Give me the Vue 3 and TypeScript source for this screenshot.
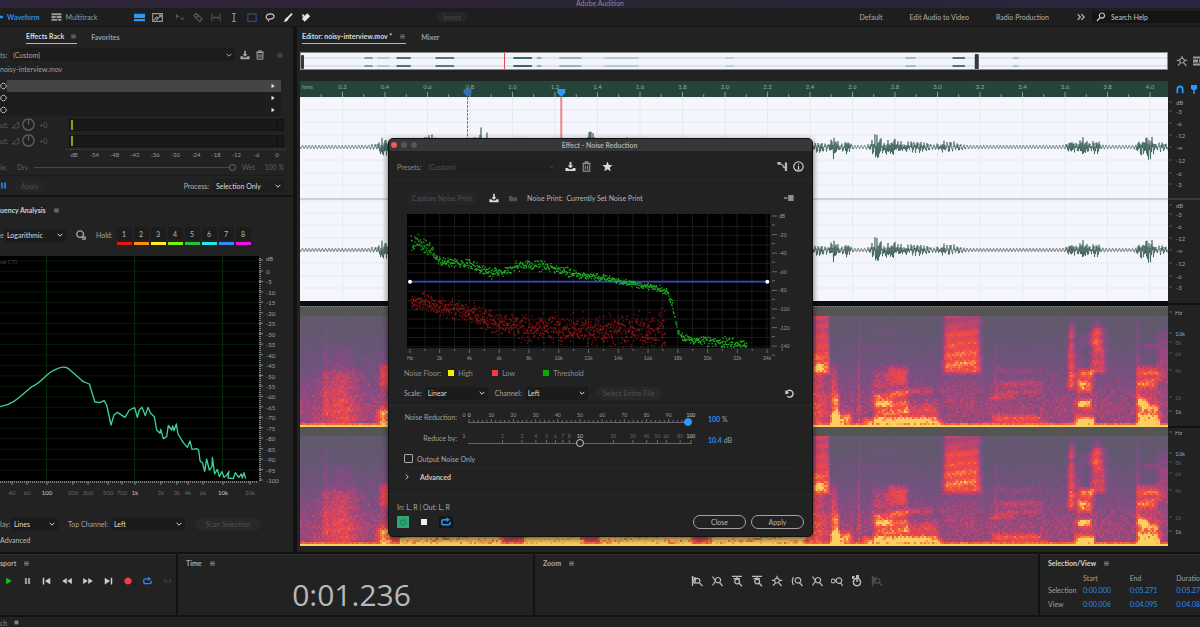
<script setup lang="ts">
import { h, ref } from 'vue'

interface Glyph { s?: string; f?: string; w?: number }

const glyphs: Record<string, Glyph> = {
  menu: { s: 'M2 3.5H10M2 6H10M2 8.5H10', w: 1.3 },
  save: { f: 'M5 1H7V5H9L6 8L3 5H5ZM0.5 7.5H3L4.5 9H7.5L9 7.5H11.5V11H0.5Z' },
  trash: { s: 'M2.5 3H9.5V11H2.5ZM1.5 2.6H10.5M4.5 2.4V1H7.5V2.4M4.8 5V9.2M7.2 5V9.2', w: 1.2 },
  star: { f: 'M6 .6L7.6 4.3L11.6 4.6L8.5 7.2L9.5 11.2L6 9L2.5 11.2L3.5 7.2L.4 4.6L4.4 4.3Z' },
  chevron: { s: 'M2.5 4.3L6 7.8L9.5 4.3', w: 1.5 },
  right: { s: 'M4.3 2.5L7.8 6L4.3 9.5', w: 1.5 },
  info: { s: 'M6 .9A5.1 5.1 0 1 1 5.9 .9ZM6 5.2V9M6 3V4.1M5 9H7', w: 1.2 },
  route: { s: 'M3.5 2.5L8 6', w: 1.1, f: 'M.5 1H4V4H.5ZM8.6 1.5H11V11H8.6ZM5 6.2H9V8.4Z' },
  stack: { f: 'M0 5H4.2V6.8H0ZM5 2.5H11.5V9.5H5Z' },
  open: { f: 'M1 3.5H4.5L5.5 5H11V10H1Z' },
  wave: { f: 'M0 1H12V11H0Z' },
  tracks: { f: 'M0 1.5H12V3.6H0ZM0 4.6H5V7.4H0ZM6 4.6H12V7.4H6ZM0 8.4H7V10.5H0ZM8 8.4H12V10.5H8Z' },
  view1: { f: 'M0 2H12V6.6H0ZM0 7.6H12V10.2H0Z' },
  view2: { s: 'M.7 1.8H11.3V10.2H.7ZM2 8.8L5 5.5L7 7.5M7.5 3.5H10V6M10 3.5L4.5 8.8', w: 1.2 },
  move: { s: 'M6.2 7.5H11.5M9 5.8V9.2', f: 'M1 1.5L6 5L3.4 5.5L1.5 8Z', w: 1.1 },
  razor: { s: 'M1 3.5L4 1L11 8L8 11ZM4 6L6.5 3.6', w: 1.5 },
  slip: { s: 'M1 1.5V10.5M11 1.5V10.5M2.5 6H9.5M4.5 4L2.5 6L4.5 8M7.5 4L9.5 6L7.5 8', w: 1.2 },
  ibeam: { s: 'M6 1.5V10.5M3.8 1.2H8.2M3.8 10.8H8.2', w: 1.4 },
  marquee: { s: 'M1 1.5H11V10.5H1Z', w: 1.5 },
  lasso: { s: 'M4 8.2C0 7.5 .5 1.6 6.5 1.6C12 1.6 12.5 7.4 7 7.6C4 7.8 3.4 10 4.8 10.6', w: 1.4 },
  brush: { s: 'M10.8 1.4L6 6.5', f: 'M5.6 5.5L7 7C5.8 10.5 3.6 11.4 .8 11C2.6 9.5 2.4 6.5 5.6 5.5Z', w: 2.2 },
  heal: { f: 'M7.6 1L11 4.4L4.4 11L1 7.6ZM1.5 2.5H4V5H1.5Z' },
  search: { s: 'M7.2 1.2A3.1 3.1 0 1 1 7.1 1.2ZM5 6.6L1.2 10.8', w: 1.4 },
  more: { s: 'M2 2.6L5.2 6L2 9.4M6.5 2.6L9.7 6L6.5 9.4', w: 1.6 },
  play: { f: 'M2.5 1L11 6L2.5 11Z' },
  pause: { f: 'M1.5 1H5.2V11H1.5ZM6.8 1H10.5V11H6.8Z' },
  first: { f: 'M1 1.5H3V10.5H1ZM11 1.5V10.5L4 6Z' },
  rewind: { f: 'M5.7 2.5V9.5L.2 6ZM11.8 2.5V9.5L6.3 6Z' },
  forward: { f: 'M.2 2.5V9.5L5.7 6ZM6.3 2.5V9.5L11.8 6Z' },
  last: { f: 'M9 1.5H11V10.5H9ZM1 1.5V10.5L8 6Z' },
  record: { f: 'M6 .6A5.4 5.4 0 1 1 5.9 .6Z' },
  loop: { s: 'M7.5 9.4H3Q1 9.4 1 7.4V5.2Q1 3.2 3 3.2H7M11 5.6V7.4Q11 9.4 9 9.4H5', f: 'M6.5 .4L10.8 3.2L6.5 6Z', w: 1.8 },
  skip: { s: 'M3.5 3.5L1 6L3.5 8.5M8.5 3.5L11 6L8.5 8.5M5 6H7', w: 1.2 },
  stop: { f: 'M1.5 1.5H10.5V10.5H1.5Z' },
  power: { s: 'M3.6 3.2A4 4 0 1 0 8.4 3.2M6 1.2V5.5', w: 1.2 },
  ring: { s: 'M6 1.3A4.7 4.7 0 1 1 5.9 1.3Z', w: 1.4 },
  knob: { s: 'M6 .8A5.2 5.2 0 1 1 5.9 .8ZM6 2V6', w: 1.2 },
  ramp: { s: 'M1 10.5H10.5V2.5Z', w: 1 },
  arrow: { f: 'M3 1.5L9.5 6L3 10.5Z' },
  undo: { s: 'M2 4.2A4.6 4.6 0 1 1 3 9.6', f: 'M.2 1.6L5.8 5.2L.6 7.4Z', w: 1.9 },
  lens: { s: 'M5 1A4 4 0 1 1 4.9 1ZM7 8.5H11V11H7', w: 1.5 },
  magnet: { s: 'M2.5 11V5.5A3.5 3.5 0 0 1 9.5 5.5V11', w: 2.4 },
  pin: { f: 'M2 0H10V5L7 7V12H5V7L2 5Z' },
  zoomIn: { s: 'M1.5 1V11M1.5 1.5L5 5M5 2.5L2 6L4 9M6.5 3.4A2.4 2.4 0 1 1 6.4 3.4ZM8.2 7.6L11.5 11', w: 1.3 },
  zoomOut: { s: 'M1.5 1.5L4.5 6L1.5 10.5M7 2.5A2.7 2.7 0 1 1 6.9 2.5ZM8.6 7.5L11.5 11', w: 1.2 },
  zoomTop: { s: 'M1 1.4H11M2.5 3.6H9M6 1.5V5M6.2 4A2.4 2.4 0 1 1 6.1 4ZM8 8L11 11.3', w: 1.3 },
  zoomAll: { s: 'M6 .8V4M.8 5.4H4M8 5.4H11.2M2 10.5L4.5 7.8M7.4 7.4L10.5 11M6 3.2A2.4 2.4 0 1 1 5.9 3.2Z', w: 1.2 },
  zoomSel: { s: 'M2.5 2Q.2 6 2.5 10M7 2.6A2.8 2.8 0 1 1 6.9 2.6ZM8.8 8L11.5 11', w: 1.2 },
  zoomBoth: { s: 'M2.2 4A2 2 0 1 1 2.1 4ZM8 2.8A2.8 2.8 0 1 1 7.9 2.8ZM9.6 8L11.8 11', w: 1.2 },
  clock: { s: 'M6 3.6A3.6 3.6 0 1 1 5.9 3.6ZM6 4.5V7', f: 'M5 0H8V3.5H5ZM1 1H3.5V4H1Z', w: 1.5 },
}

const Icon = (p: { name: string }) => {
  const g = glyphs[p.name]
  return h('svg', { class: 'icon', viewBox: '0 0 12 12', 'aria-hidden': 'true' }, [
    g.s ? h('path', { d: g.s, fill: 'none', stroke: 'currentColor', 'stroke-width': g.w ?? 1.2 }) : null,
    g.f ? h('path', { d: g.f, fill: 'currentColor' }) : null,
  ])
}
Icon.props = ['name']

const wet = ref(100)
const reduction = ref(100)
const reduceBy = ref(50)
const noiseOnly = ref(false)

let seed = 20417
const rnd = () => {
  seed = (seed * 1103515245 + 12345) % 2147483648
  return seed / 2147483648
}
const pct = (v: number) => `${v}%`
const clamp = (v: number, a: number, b: number) => Math.min(b, Math.max(a, v))

/* Waveform: [centre, half width, amplitude] of each burst */
const bursts = [
  [84, 7, 9], [90, 20, 5], [130, 9, 14], [150, 8, 7], [182, 13, 19], [230, 14, 9], [290, 8, 19], [330, 16, 9],
  [420, 22, 8], [470, 16, 8], [520, 12, 5], [534, 6, 11], [546, 7, 6], [577, 8, 13], [592, 14, 8], [615, 20, 6],
  [648, 18, 5], [773, 8, 6], [784, 7, 9], [796, 7, 6], [841, 6, 10], [848, 8, 14], [862, 8, 4],
]
function wavePath(): string {
  let d = 'M0 0'
  for (let i = 0; i < 1736; i++) {
    const x = i / 2
    let env = 0
    for (const [c, w, a] of bursts) {
      const t = Math.abs(x - c) / w
      if (t < 1.5) env = Math.max(env, a * Math.exp(-t * t * 1.6))
    }
    const calm = Math.sin(x * 1.9) * 1.8
    const y = calm + (i % 2 ? 1 : -1) * env * (0.15 + rnd() * 0.85)
    d += `L${x} ${y.toFixed(1)}`
  }
  return d
}
const wave = wavePath()
const waveRows = [0, 12, 24, 37, 62, 75, 87].map(v => v + 1)
const seconds = Array.from({ length: 20 }, (_, i) => ({ at: (42.5 * (i + 1)) / 8.68, text: ((i + 1) / 5).toFixed(1) }))

/* Spectrogram: [x0, x1, y0, y1, level, softness], x in pixels, y as a share of the height */
const zones = [
  [22, 58, 0.5, 1, 0.12, 12], [23, 26, 0.12, 0.9, 0.12, 2], [32, 48, 0.28, 0.95, 0.12, 8], [78, 90, 0.85, 1, 0.36, 5],
  [80, 100, 0.45, 0.62, 0.3, 3], [82, 100, 0.1, 1, 0.1, 4], [100, 516, 0.35, 1, 0.2, 8], [100, 200, 0.85, 1, 0.35, 6],
  [225, 280, 0.88, 1, 0.4, 6], [300, 390, 0.9, 1, 0.35, 6], [410, 505, 0.88, 1, 0.36, 8],
  [514, 528, -0.1, 0.5, 0.5, 2], [514, 528, 0.45, 1, 0.16, 6], [531, 536, 0.45, 1, 0.24, 3], [531, 550, 0.9, 1, 0.46, 3],
  [533, 538, 0.72, 0.95, 0.28, 2], [557, 558, 0.05, 1, 0.24, 1], [573, 605, 0.48, 0.74, 0.17, 5], [588, 606, 0.46, 0.6, 0.2, 5],
  [563, 640, 0.95, 1, 0.5, 3], [574, 606, 0.78, 0.94, 0.34, 3], [574, 590, 0.73, 0.8, 0.26, 3], [590, 606, 0.7, 0.72, 0.28, 3],
  [606, 632, 0.68, 0.69, 0.26, 2], [606, 636, 0.86, 0.95, 0.24, 3], [606, 636, 0.8, 0.83, 0.14, 3],
  [644, 679, -0.05, 0.5, 0.43, 5], [645, 676, 0.12, 0.46, 0.14, 4], [645, 676, 0.5, 0.8, 0.06, 6],
  [694, 696, 0.2, 0.8, 0.12, 1], [696, 740, 0.48, 0.5, 0.14, 5], [696, 740, 0.6, 0.63, 0.2, 5], [700, 740, 0.68, 0.7, 0.16, 5],
  [690, 712, 0.72, 0.75, 0.16, 5], [694, 738, 0.92, 0.94, 0.34, 4], [685, 745, 0.96, 1, 0.14, 5],
  [768, 772, 0.1, 0.66, 0.34, 3], [770, 775, 0.02, 0.2, 0.2, 3], [770, 780, 0.25, 0.6, 0.16, 5],
  [791, 804, 0.1, 0.5, 0.36, 5], [794, 799, 0, 0.3, 0.2, 3], [780, 794, 0.16, 0.24, 0.18, 4], [780, 792, 0.49, 0.56, 0.34, 3],
  [777, 790, 0.6, 0.67, 0.4, 3], [777, 790, 0.78, 0.82, 0.42, 2], [775, 793, 0.93, 1, 0.46, 3], [776, 792, 0.5, 1, 0.12, 6],
  [836, 838, 0.06, 1, 0.24, 1], [838, 856, 0.46, 0.53, 0.32, 4], [838, 854, 0.58, 0.64, 0.3, 4], [838, 846, 0.76, 0.8, 0.42, 3],
  [840, 856, 0.82, 0.85, 0.4, 3], [838, 858, 0.9, 1, 0.42, 3], [838, 858, 0.5, 1, 0.16, 5], [858, 868, 0.14, 0.58, 0.22, 5],
  [843, 856, 0.26, 0.28, 0.24, 3], [572, 600, 0.12, 0.15, 0.12, 6], [562, 586, 0.28, 0.3, 0.14, 5], [695, 740, 0.1, 0.12, 0.1, 6],
]
const ramp: [number, number[]][] = [
  [0, [92, 90, 98]], [0.14, [101, 88, 114]], [0.28, [114, 82, 126]], [0.4, [138, 74, 130]], [0.52, [176, 70, 115]],
  [0.64, [218, 68, 92]], [0.78, [244, 76, 66]], [0.9, [248, 132, 68]], [1, [252, 208, 96]],
]
function tone(v: number): string {
  for (let i = 1; i < ramp.length; i++) {
    const [b, cb] = ramp[i]
    if (v <= b) {
      const [a, ca] = ramp[i - 1]
      const t = (v - a) / (b - a)
      return `rgb(${ca.map((c, k) => Math.round(c + (cb[k] - c) * t)).join(',')})`
    }
  }
  return 'rgb(252,208,96)'
}
const COLS = 434
const ROWS = 56
const LEVELS = 26
function spectrum() {
  const out: string[] = Array(LEVELS).fill('')
  for (let r = 0; r < ROWS; r++) {
    const y = r / (ROWS - 1)
    let run = -1
    let from = 0
    for (let c = 0; c <= COLS; c++) {
      let level = -1
      if (c < COLS) {
        const x = c * 2
        let v = 0.1 + 0.36 * clamp((y - 0.12) / 0.7, 0, 1)
        for (const [x0, x1, y0, y1, a, s] of zones) {
          const fx = clamp((x - x0 + s) / (s * 1.4), 0, 1) * clamp((x1 - x + s) / (s * 1.4), 0, 1)
          if (fx === 0) continue
          const fy = clamp((y - y0) / 0.05 + 0.8, 0, 1) * clamp((y1 - y) / 0.05 + 0.8, 0, 1)
          v += a * fx * fy * (1 + 0.1 * Math.sin(y * 70 + x * 0.1))
        }
        v += (rnd() + rnd() - 1) * (0.04 + 0.12 * clamp(y * 1.6, 0, 1))
        if (r === ROWS - 2) v = Math.max(v, 0.76 + rnd() * 0.12)
        if (r === ROWS - 1) v = 0.98
        level = Math.round(clamp(v, 0, 1) * (LEVELS - 1))
      }
      if (level !== run) {
        if (run >= 0) out[run] += `M${from} ${r}h${c - from}v1h${from - c}z`
        run = level
        from = c
      }
    }
  }
  return out.map((d, i) => ({ d, fill: tone(i / (LEVELS - 1)) }))
}
const bands = spectrum()

/* Overview bursts: [x share, width share, opacity] */
const overview = [
  [7.3, 1, 0.5], [8.8, 1.4, 0.2], [11, 1.7, 0.8], [15.5, 2.2, 0.75], [24.5, 2.2, 0.9], [27.2, 0.6, 0.4], [29.8, 2.6, 0.35],
  [35, 4, 0.2], [49, 1, 0.15], [69.8, 1.2, 0.3], [75.2, 1.5, 0.8], [82.2, 0.7, 0.25],
]

/* Frequency analysis */
const spectrumLine = 'M0 470C40 464 60 440 95 410C120 402 140 370 160 362Q195 342 210 360L250 395L268 402L275 425L285 456L300 458L312 452L320 465L333 525L342 495L352 487L375 502L388 480L404 473L412 502L418 480L426 472L436 497L444 472L452 490L463 500L470 540L480 550L482 538L490 566L500 560L505 526L515 540L518 528L522 542L529 522L534 552L550 578L562 592L570 573L576 598L590 596L596 600L600 632L608 640L614 664L620 627L628 660L636 650L637 622L644 672L652 658L658 680L666 665L672 682L680 676L687 664L684 684L700 686L706 668L716 682L724 672L727 684L732 668L737 686'
const levelMarks = ['dB', '0', '-5', '-10', '-15', '-20', '-25', '-30', '-35', '-40', '-45', '-50', '-55', '-60', '-65', '-70', '-75', '-80', '-85', '-90', '-95', '-100']
const freqMarks = [
  { x: 12, t: '40' }, { x: 27, t: '60' }, { x: 47, t: '100', on: true }, { x: 73, t: '200' }, { x: 88, t: '300' },
  { x: 108, t: '500' }, { x: 122, t: '700' }, { x: 135, t: '1k', on: true }, { x: 161, t: '2k' }, { x: 177, t: '3k' },
  { x: 188, t: '4k' }, { x: 203, t: '6k' }, { x: 223, t: '10k', on: true }, { x: 250, t: '20k' },
]
const holds = ['#f01010', '#ff8c10', '#fff020', '#78f010', '#28c040', '#20e8f0', '#3090f8', '#f010e8']
const meterMarks = ['dB', '-54', '-48', '-42', '-36', '-30', '-24', '-18', '-12', '-6', '0']

/* Noise print scatter, in chart units */
function at(line: number[][], x: number): number {
  for (let i = 1; i < line.length; i++) {
    if (x <= line[i][0]) {
      const [x0, y0] = line[i - 1]
      const [x1, y1] = line[i]
      return y0 + ((y1 - y0) * (x - x0)) / (x1 - x0)
    }
  }
  return line[line.length - 1][1]
}
const high = [[62, 340], [80, 330], [110, 350], [150, 395], [200, 397], [240, 402], [300, 425], [330, 425], [370, 408], [450, 402], [520, 420], [570, 434], [640, 441], [700, 455], [780, 467], [830, 482], [845, 520], [862, 605], [880, 622], [960, 631], [1070, 640]]
const low = [[62, 520], [100, 506], [150, 530], [210, 535], [270, 560], [330, 580], [420, 590], [550, 597], [825, 600]]
function dots(line: number[][], n: number, spread: (x: number) => number): string {
  const x0 = line[0][0]
  const x1 = line[line.length - 1][0]
  let d = ''
  for (let i = 0; i < n; i++) {
    const x = x0 + ((x1 - x0) * i) / n
    const y = at(line, x) + (rnd() + rnd() + rnd() - 1.5) * spread(x)
    d += `M${x.toFixed(0)} ${clamp(y, 254, 647).toFixed(0)}h4v4h-4z`
  }
  return d
}
const highDots = dots(high, 900, x => (x < 130 ? 26 : x < 560 ? 15 : x < 860 ? 10 : 14))
const lowDots = dots(low, 1100, x => 20 + x * 0.04)
const noiseDb = ['dB', '-20', '-40', '-60', '-80', '-100', '-120', '-140']
const noiseHz = ['Hz', '2k', '4k', '6k', '8k', '10k', '12k', '14k', '16k', '18k', '20k', '22k', '24k']
const logMarks = [2, 3, 4, 5, 6, 7, 8, 10, 20, 30, 40, 50, 60, 80, 100]
const logAt = (v: number) => 2.2 + Math.log10(v) * 47.8

const scaleTop = [[5, 'dB'], [14, '-3'], [26, '-6'], [38, '-12'], [50, '-∞'], [63, '-12'], [76, '-6'], [87, '-3']] as const
const scaleHz = [[215, 'Hz', 1], [236, '10k', 1], [245, '8k', 0], [256, '6k', 0], [273, '4k', 0], [300, '2k', 0], [314, '1k', 1]] as const
const zoomIcons = ['zoomIn', 'zoomOut', 'zoomTop', 'zoomTop', 'zoomAll', 'zoomSel', 'zoomOut', 'zoomBoth', 'clock', 'zoomIn']
const transport = ['play', 'pause', 'first', 'rewind', 'forward', 'last', 'record', 'loop', 'skip']
const tools = ['move', 'razor', 'slip', 'ibeam', 'marquee', 'lasso', 'brush', 'heal']
</script>

<template>
  <div class="shell">
    <header class="title">Adobe Audition</header>

    <nav class="toolbar">
      <button class="mode on"><Icon name="wave" />Waveform</button>
      <button class="mode"><Icon name="tracks" />Multitrack</button>
      <div class="views">
        <button class="on" aria-label="Waveform view"><Icon name="view1" /></button>
        <button aria-label="Spectral view"><Icon name="view2" /></button>
      </div>
      <div class="tools">
        <button v-for="t in tools" :key="t" :class="t" :aria-label="t"><Icon :name="t" /></button>
      </div>
      <button class="insert" disabled>Insert</button>
      <div class="spaces">
        <a href="#">Default</a><a href="#">Edit Audio to Video</a><a href="#">Radio Production</a>
        <button aria-label="More workspaces"><Icon name="more" /></button>
      </div>
      <label class="search"><Icon name="search" /><input type="text" aria-label="Search Help" placeholder="Search Help" /></label>
    </nav>

    <main>
      <aside>
        <section class="rack">
          <div class="tabs">
            <button class="tab on">Effects Rack <Icon name="menu" /></button>
            <button class="tab">Favorites</button>
          </div>
          <div class="preset">
            <label for="rack-preset">ts:</label>
            <span class="sel grow"><select id="rack-preset"><option>(Custom)</option></select><Icon name="chevron" /></span>
            <button aria-label="Save preset"><Icon name="save" /></button>
            <button aria-label="Delete preset"><Icon name="trash" /></button>
            <button class="dim fav" aria-label="Favorite"><Icon name="star" /></button>
          </div>
          <p class="file">noisy-interview.mov</p>
          <ul class="slots">
            <li v-for="n in 3" :key="n" :class="{ on: n === 1 }"><Icon name="ring" /><span></span><Icon name="arrow" /></li>
          </ul>
          <div v-for="n in 2" :key="n" class="meter">
            <span>ut:</span><Icon name="ramp" /><Icon class="knob" name="knob" /><span class="gain">+0</span>
            <div class="bar"><i></i></div><div class="clip"></div>
          </div>
          <div class="marks"><span v-for="m in meterMarks" :key="m">{{ m }}</span></div>
          <div class="mix">
            <span>ix:</span><label for="wet">Dry</label><input id="wet" v-model="wet" type="range" disabled />
            <span>Wet</span><span class="right">100 %</span>
          </div>
          <div class="process">
            <button class="blue" aria-label="Rack power"><Icon name="pause" /></button>
            <button class="pill" disabled>Apply</button>
            <label for="process">Process:</label>
            <span class="sel"><select id="process"><option>Selection Only</option></select><Icon name="chevron" /></span>
          </div>
        </section>

        <section class="freq">
          <h2>uency Analysis <Icon name="menu" /></h2>
          <div class="hold">
            <label for="fscale">e:</label>
            <span class="sel"><select id="fscale"><option>Logarithmic</option></select><Icon name="chevron" /></span>
            <Icon class="lens" name="lens" />
            <span>Hold:</span>
            <div class="slotset"><button v-for="(c, i) in holds" :key="c" :style="{ borderColor: c }">{{ i + 1 }}</button></div>
          </div>
          <div class="plot">
            <svg class="curve" viewBox="0 18 777 675" preserveAspectRatio="none" aria-label="Frequency curve">
              <path v-for="n in 21" :key="n" :d="`M0 ${n * 31.4 + 1}H777`" class="gridline" />
              <path d="M140 18V693M404 18V693M668 18V693" class="gridline strong" />
              <path :d="spectrumLine" class="trace" />
            </svg>
            <span class="live">ve CTI</span>
            <svg class="levels" aria-hidden="true">
              <g v-for="(m, i) in levelMarks" :key="m"><path :d="`M0 ${i ? 15 + (i - 1) * 10.45 : 4}h4`" /><text x="7" :y="i ? 18 + (i - 1) * 10.45 : 5">{{ m }}</text></g>
              <path d="M1 2V225" class="comb" />
            </svg>
          </div>
          <svg class="hz" aria-hidden="true">
            <path d="M0 1H258" class="comb" />
            <g v-for="m in freqMarks" :key="m.t"><path :d="`M${m.x} 0v4`" /><text :x="m.x" y="14" :class="{ lit: m.on }">{{ m.t }}</text></g>
          </svg>
          <div class="display">
            <label for="lines">lay:</label>
            <span class="sel lines"><select id="lines"><option>Lines</option></select><Icon name="chevron" /></span>
            <label for="top">Top Channel:</label>
            <span class="sel top"><select id="top"><option>Left</option></select><Icon name="chevron" /></span>
            <button class="pill" disabled>Scan Selection</button>
          </div>
          <p class="adv">Advanced</p>
        </section>
      </aside>

      <section class="editor">
        <div class="tabs">
          <button class="tab on">Editor: noisy-interview.mov * <Icon name="menu" /></button>
          <button class="tab">Mixer</button>
        </div>
        <div class="lane">
          <svg class="overview" aria-label="Overview">
            <path v-for="y in [5, 13]" :key="y" :d="`M0 ${y}h2000`" class="rule" />
            <template v-for="([x, w, o], i) in overview" :key="i">
              <rect v-for="y in [4, 12]" :key="y" :x="pct(x)" :y="y" :width="pct(w)" height="2" rx="1" :opacity="o" />
            </template>
            <line x1="23.5%" x2="23.5%" y1="0" y2="18" class="head" />
            <rect x="0" y="2" width="3" height="14" rx="1" class="grip" />
            <rect x="77.8%" y="1" width="4" height="16" rx="1" class="grip" />
          </svg>
          <div class="side"><Icon name="zoomAll" /><Icon name="tracks" /></div>
        </div>
        <div class="lane timeline">
          <svg class="ruler" aria-hidden="true">
            <text x="2" y="8">hms</text>
            <g v-for="s in seconds" :key="s.text">
              <text :x="pct(s.at)" y="8" class="mid">{{ s.text }}</text>
              <line :x1="pct(s.at)" :x2="pct(s.at)" y1="11" y2="16" />
              <line :x1="pct(s.at - 2.45)" :x2="pct(s.at - 2.45)" y1="13" y2="16" />
            </g>
            <svg x="19.3%" y="0" width="10" height="16" overflow="visible"><path d="M-4 8H4V12L0 16L-4 12Z" fill="#2e6fc0" /></svg>
            <svg x="30.1%" y="0" width="10" height="16" overflow="visible"><path d="M-4 8H4V12L0 16L-4 12Z" fill="#2a98ff" /></svg>
          </svg>
          <div class="side snap"><Icon name="magnet" /><Icon name="pin" /></div>
        </div>
        <div class="lane">
          <div class="stack">
            <svg class="waves" aria-label="Waveform">
              <g class="guides">
                <line v-for="s in seconds" :key="s.text" :x1="pct(s.at)" :x2="pct(s.at)" y1="0" y2="204" />
                <line v-for="y in waveRows" :key="y" x1="0" x2="100%" :y1="y" :y2="y" />
                <line v-for="y in waveRows" :key="-y" x1="0" x2="100%" :y1="y + 103" :y2="y + 103" />
              </g>
              <rect x="0" y="101" width="100%" height="2" fill="#cfd0d2" />
              <svg viewBox="0 0 868 204" preserveAspectRatio="none" width="100%" height="204">
                <path :d="wave" class="wave" transform="translate(0 50)" />
                <path :d="wave" class="wave" transform="translate(0 153)" />
                <path d="M0 153H868" class="zero" />
              </svg>
              <line x1="19.3%" x2="19.3%" y1="0" y2="204" class="cue" />
              <line x1="30.1%" x2="30.1%" y1="0" y2="204" class="cursor" />
            </svg>
            <div v-for="n in 2" :key="n" class="spectral">
              <svg :viewBox="`0 0 ${COLS} ${ROWS}`" preserveAspectRatio="none" aria-label="Spectral display">
                <path v-for="(b, i) in bands" :key="i" :d="b.d" :fill="b.fill" />
              </svg>
            </div>
          </div>
          <svg class="scale" aria-hidden="true">
            <g v-for="k in 2" :key="k">
              <g v-for="([y, t], i) in scaleTop" :key="i"><path :d="`M1 ${y + (k - 1) * 103}h3`" /><text x="8" :y="y + 3 + (k - 1) * 103">{{ t }}</text></g>
              <g v-for="([y, t, b], i) in scaleHz" :key="i" :class="{ faint: !b }"><path :d="`M1 ${y + (k - 1) * 120}h3`" /><text x="7" :y="y + 3 + (k - 1) * 120">{{ t }}</text></g>
            </g>
            <path d="M0 102H32" /><path d="M0 207H32M0 330H32" class="split" />
          </svg>
        </div>
      </section>
    </main>

    <footer>
      <section>
        <h2>sport <Icon name="menu" /></h2>
        <div class="transport"><button v-for="t in transport" :key="t" :class="t" :aria-label="t"><Icon :name="t" /></button></div>
      </section>
      <section class="padded"><h2>Time <Icon name="menu" /></h2><output>0:01.236</output></section>
      <section class="padded">
        <h2>Zoom <Icon name="menu" /></h2>
        <div class="zooms"><button v-for="(z, i) in zoomIcons" :key="i" :aria-label="`Zoom tool ${i + 1}`"><Icon :name="z" /></button></div>
      </section>
      <section class="padded">
        <h2 class="lit">Selection/View <Icon name="menu" /></h2>
        <table>
          <thead><tr><th></th><th>Start</th><th>End</th><th>Duration</th></tr></thead>
          <tbody>
            <tr><th>Selection</th><td>0:00.000</td><td>0:05.271</td><td>0:05.271</td></tr>
            <tr><th>View</th><td>0:00.006</td><td>0:04.095</td><td>0:04.089</td></tr>
          </tbody>
        </table>
      </section>
    </footer>
    <div class="status"><span>ch</span><Icon name="stop" /></div>

    <div class="dialog" role="dialog" aria-label="Effect - Noise Reduction">
      <div class="bar-top"><i class="close"></i><i></i><i></i><span>Effect - Noise Reduction</span></div>
      <div class="drow presets">
        <label for="preset">Presets:</label>
        <span class="sel wide dim"><select id="preset" disabled><option>(Custom)</option></select><Icon name="chevron" /></span>
        <button aria-label="Save preset"><Icon name="save" /></button>
        <button class="muted" aria-label="Delete preset"><Icon name="trash" /></button>
        <button class="fav" aria-label="Favorite"><Icon name="star" /></button>
        <button class="end" aria-label="Routing"><Icon name="route" /></button>
        <button aria-label="Information"><Icon name="info" /></button>
      </div>
      <div class="box">
        <div class="drow capture">
          <button class="pill" disabled>Capture Noise Print</button>
          <button aria-label="Save noise print"><Icon name="save" /></button>
          <button class="dim" aria-label="Load noise print"><Icon name="open" /></button>
          <span>Noise Print:&nbsp; Currently Set Noise Print</span>
          <button class="end muted" aria-label="Chart options"><Icon name="stack" /></button>
        </div>
        <div class="print">
          <svg class="scatter" viewBox="51 252 1089 400" preserveAspectRatio="none" aria-label="Noise print chart">
            <path v-for="n in 24" :key="n" :d="`M${60 + n * 44.6} 252V652`" class="g" />
            <path v-for="n in 14" :key="n" :d="`M51 ${262 + n * 27.6}H1140`" class="g" />
            <path :d="lowDots" fill="#b81818" opacity=".72" />
            <path d="M60 454H1132" class="curve-line" />
            <path :d="highDots" fill="#25d325" opacity=".78" />
            <circle cx="60" cy="454" r="6" /><circle cx="1132" cy="454" r="6" />
          </svg>
          <svg class="db" aria-hidden="true">
            <g v-for="(t, i) in noiseDb" :key="t"><path :d="`M2 ${2 + i * 18.6}h5M2 ${11 + i * 18.6}h3`" /><text x="9" :y="4 + i * 18.6">{{ t }}</text></g>
          </svg>
          <svg class="khz" aria-hidden="true">
            <g v-for="(t, i) in noiseHz" :key="t"><line :x1="pct(0.8 + i * 8.2)" :x2="pct(0.8 + i * 8.2)" y1="1" y2="5" /><line :x1="pct(4.9 + i * 8.2)" :x2="pct(4.9 + i * 8.2)" y1="1" y2="3" /><text :x="pct(0.8 + i * 8.2)" y="12">{{ t }}</text></g>
          </svg>
        </div>
        <div class="drow legend">
          <span>Noise Floor:</span><span class="key"><i class="y"></i>High</span><span class="key"><i class="r"></i>Low</span><span class="key"><i class="t"></i>Threshold</span>
        </div>
        <div class="drow scales">
          <label for="scale">Scale:</label><span class="sel"><select id="scale"><option>Linear</option></select><Icon name="chevron" /></span>
          <label for="channel">Channel:</label><span class="sel"><select id="channel"><option>Left</option></select><Icon name="chevron" /></span>
          <button class="pill" disabled>Select Entire File</button>
          <button class="end" aria-label="Reset"><Icon name="undo" /></button>
        </div>
      </div>
      <div class="sliders">
        <label for="nr">Noise Reduction:</label>
        <div class="slider">
          <svg aria-hidden="true">
            <text x="0" y="6">0</text>
            <text v-for="n in 11" :key="n" :x="pct(2.2 + (n - 1) * 9.56)" y="6" :class="{ lit: n === 1 || n === 11 }">{{ (n - 1) * 10 }}</text>
            <line v-for="n in 51" :key="n" :x1="pct(2.2 + (n - 1) * 1.912)" :x2="pct(2.2 + (n - 1) * 1.912)" :y1="n % 5 === 1 ? 8 : 9" y2="11" />
          </svg>
          <input id="nr" v-model="reduction" class="full" type="range" min="0" max="100" />
        </div>
        <output><b>100</b> %</output>
        <label for="rb">Reduce by:</label>
        <div class="slider">
          <svg aria-hidden="true">
            <text x="0" y="6">1</text>
            <g v-for="v in logMarks" :key="v"><text :x="pct(logAt(v))" y="6" :class="v % 90 === 10 ? 'lit' : 'low'">{{ v }}</text><line :x1="pct(logAt(v))" :x2="pct(logAt(v))" y1="8" y2="11" /></g>
          </svg>
          <input id="rb" v-model="reduceBy" type="range" min="0" max="100" />
        </div>
        <output><b>10.4</b> dB</output>
      </div>
      <label class="check"><input v-model="noiseOnly" type="checkbox" />Output Noise Only</label>
      <button class="more"><Icon name="right" />Advanced</button>
      <div class="actions">
        <p>In: L, R | Out: L, R</p>
        <div class="drow">
          <button class="green" aria-label="Power"><Icon name="power" /></button>
          <button aria-label="Stop"><Icon name="stop" /></button>
          <button class="looped" aria-label="Loop"><Icon name="loop" /></button>
          <button class="outline end">Close</button>
          <button class="outline">Apply</button>
        </div>
      </div>
    </div>
  </div>
</template>

<style>
html, body { background: #151515; }
body { margin: 0; overflow: hidden; }
</style>

<style scoped>
* { box-sizing: border-box; }
.shell { position: relative; min-height: 100vh; display: grid; grid-template-rows: auto auto auto auto 1fr; background: #121212; color: #b4b4b4; font: 7px/10px Lato, "Open Sans", sans-serif; white-space: nowrap; overflow: hidden; }
button, input, select, output { font: inherit; color: inherit; }
button { background: none; border: 0; padding: 0; display: inline-flex; align-items: center; justify-content: center; }
h2, p, ul { margin: 0; padding: 0; font: inherit; list-style: none; }
a { color: inherit; text-decoration: none; }
svg { display: block; }
svg text { fill: #a0a0a0; font-size: 6px; }
.icon { width: 10px; height: 10px; flex: none; }
.grow { flex: 1; }
.dim { color: #505050; }
.muted { color: #909090; }
.end { margin-left: auto; }

.sel { display: inline-grid; align-items: center; background: #1b1b1b; color: #dcdcdc; border-radius: 2px; height: 13px; }
.sel > * { grid-area: 1 / 1; }
.sel select { appearance: none; background: none; border: 0; width: 100%; height: 13px; padding: 0 12px 0 3px; opacity: 1; }
.sel .icon { justify-self: end; width: 8px; height: 8px; margin-right: 2px; pointer-events: none; }
.sel.dim { color: #505050; background: #202020; }
.pill { height: 13px; border-radius: 7px; background: #282828; color: #505050; padding: 0 8px; }

.title { height: 8px; line-height: 6px; text-align: center; background: linear-gradient(90deg, #30263a, #2a2433 60%, #282742); color: #8c8792; }
.toolbar { height: 19px; display: flex; align-items: center; background: #1e1e1e; border-bottom: 1px solid #151515; }
.toolbar .mode { gap: 4px; margin-right: 11px; color: #9a9a9a; }
.toolbar .mode .icon { width: 11px; }
.toolbar .mode.on { color: #2d8ceb; font-weight: 700; }
.toolbar .mode.on .icon { width: 3px; }
.views { display: flex; gap: 7px; margin-left: 26px; color: #999; }
.views .icon { width: 11px; height: 11px; }
.views .on { color: #2d96fa; }
.tools { display: flex; gap: 8px; margin-left: 12px; color: #e4e4e4; }
.tools .icon { width: 10px; height: 11px; }
.tools .move, .tools .razor, .tools .slip { color: #555; }
.tools .ibeam { color: #909090; }
.tools .marquee { color: #254d80; }
.tools .lasso { color: #c8c8c8; }
.insert { margin-left: 126px; width: 30px; height: 10px; background: #262626; color: #484848; border-radius: 5px; }
.spaces { margin-left: auto; display: flex; align-items: center; gap: 27px; color: #b0b0b0; }
.search { display: flex; align-items: center; gap: 5px; width: 108px; height: 12px; margin-left: 6px; padding-left: 4px; background: #141414; color: #c8c8c8; }
.search input { min-width: 0; flex: 1; background: none; border: 0; padding: 0; }
.search input::placeholder { color: #c8c8c8; opacity: 1; }

main { display: grid; grid-template-columns: 293px minmax(0, 1fr); column-gap: 4px; }
aside { display: grid; grid-template-rows: auto 1fr; row-gap: 2px; min-width: 0; overflow: hidden; }
.rack, .freq, .editor { background: #222; }
.tabs { display: flex; height: 19px; gap: 14px; }
.tab { align-items: center; gap: 6px; height: 17px; padding-top: 2px; color: #9c9c9c; font-weight: 700; }
.tab.on { color: #dadada; border-bottom: 1px solid #b8b8b8; }
.tab .icon { width: 7px; height: 7px; color: #888; }
.rack { padding: 0 9px 0 0; }
.rack .tabs { padding-left: 26px; }
.preset { display: flex; align-items: center; gap: 5px; height: 17px; color: #9c9c9c; }
.preset label { width: 5px; }
.preset button { color: #a8a8a8; }
.preset .sel { background: #1c1c1c; color: #a8a8a8; }
.preset .fav { margin-left: 6px; color: #454545; }
.preset .fav .icon { width: 8px; }
.file { height: 17px; line-height: 13px; color: #a0a0a0; }
.slots { display: grid; width: 281px; }
.slots li { display: flex; height: 12px; align-items: center; background: #1d1d1d; color: #ddd; }
.slots li span { flex: 1; }
.slots li .icon { width: 7px; height: 8px; }
.slots li .icon:last-child { width: 6px; height: 6px; margin-right: 5px; }
.slots li.on { background: linear-gradient(90deg, #222 7px, #454545 7px); }
.meter { display: flex; align-items: center; height: 16px; padding-top: 1px; color: #606060; }
.meter .icon { margin-left: 3px; width: 9px; height: 9px; }
.meter .knob { width: 13px; height: 13px; margin-left: 2px; }
.meter .gain { width: 34px; padding-left: 4px; }
.meter .bar { flex: 1; height: 12px; background: #191919; border: 1px solid #131313; }
.meter .bar i { display: block; height: 10px; width: 2px; background: #98980c; margin-left: 1px; }
.meter .clip { width: 7px; height: 12px; background: #191919; border: 1px solid #111; }
.marks { display: flex; justify-content: space-between; margin: 1px -2px 0 66px; height: 10px; padding-right: 1px; color: #999; font-size: 6px; border-top: 1px dotted #484848; }
.marks span { width: 16px; text-align: center; }
.mix { display: flex; align-items: center; gap: 6px; height: 16px; color: #606060; }
.mix label { margin-left: 4px; }
.mix input { flex: 1; }
.mix .right { width: 23px; text-align: right; }
.process { display: flex; align-items: center; height: 20px; border-top: 1px solid #1b1b1b; }
.process .blue { color: #2e74c0; width: 7px; margin-right: 7px; }
.process .blue .icon { width: 7px; height: 7px; }
.process .pill { width: 32px; margin-right: auto; background: #252525; }
.process .sel { width: 71px; margin-left: 4px; background: #1e1e1e; }

input[type="range"] { appearance: none; background: none; margin: 0; height: 9px; width: 100%; min-width: 0; display: block; }
input[type="range"]::-webkit-slider-runnable-track { height: 1px; background: #666; margin: 0 4px; }
input[type="range"]::-webkit-slider-thumb { appearance: none; width: 8px; height: 8px; margin-top: -4px; border-radius: 50%; border: 1px solid #c8c8c8; background: #222; }
input.full::-webkit-slider-thumb { background: #2a98ff; border-color: #2a98ff; }
.mix input::-webkit-slider-runnable-track { background: #484848; margin: 0; }
.mix input::-webkit-slider-thumb { width: 7px; height: 7px; margin-top: -3px; border-color: #6c6c6c; }

.freq h2 { height: 26px; display: flex; align-items: center; gap: 7px; color: #d0d0d0; font-weight: 700; }
h2 .icon { width: 7px; height: 7px; color: #999; }
.hold { display: flex; align-items: center; height: 24px; margin-bottom: 9px; color: #a4a4a4; }
.hold label { width: 4px; }
.hold .sel { width: 62px; }
.hold .lens { margin: 0 10px; color: #aaa; }
.slotset { display: flex; gap: 2px; margin-left: 4px; }
.slotset button { width: 15px; height: 20px; border-bottom: 3px solid; color: #b8b8b8; background: linear-gradient(#1c1c1c, #1c1c1c) 0 2px / 15px 13px no-repeat; }
.plot { display: grid; grid-template-columns: minmax(0, 1fr) 34px; height: 225px; }
.plot > .curve, .plot > .live { grid-area: 1 / 1; }
.curve { width: 100%; height: 225px; background: #000; }
.gridline { stroke: #041c06; stroke-width: 3; fill: none; }
.gridline.strong { stroke: #062a0a; }
.trace { fill: none; stroke: #3fcf9c; stroke-width: 4; stroke-linejoin: round; }
.live { padding-top: 1px; color: #454545; font-size: 6px; }
.levels { width: 34px; height: 225px; overflow: visible; }
.levels path, .hz path { stroke: #808080; stroke-width: 1; }
.levels text { fill: #a4a4a4; }
.comb { stroke: #808080; stroke-width: 2 !important; stroke-dasharray: 1 1; }
.hz { width: 100%; height: 32px; }
.hz text { text-anchor: middle; fill: #686868; }
.hz text.lit { fill: #ccc; }
.display { display: flex; align-items: center; height: 22px; color: #a4a4a4; }
.display label:first-child { width: 11px; }
.sel.lines { width: 47px; margin-right: 10px; }
.sel.top { width: 74px; margin-left: 3px; }
.display .pill { width: 66px; margin-left: 10px; padding: 0; }
.adv { color: #bbb; height: 12px; }

.editor { min-width: 0; padding: 0 0 6px 3px; }
.editor .tabs { height: 25px; padding-left: 2px; gap: 15px; }
.editor .tab .icon { margin-left: 1px; }
.lane { display: grid; grid-template-columns: minmax(0, 1fr) 32px; }
.overview { width: 100%; height: 18px; background: #f2f4fc; border: 1px solid #8c8c8c; }
.overview rect { fill: #2a5a4a; }
.rule { stroke: #ccd4dc; }
.head { stroke: #e04858; }
.overview .grip { fill: #383838; opacity: 1; }
.side { display: flex; align-items: center; gap: 5px; padding-left: 8px; color: #999; overflow: hidden; }
.side .icon { width: 12px; height: 12px; }
.snap { color: #2a98ff; gap: 4px; padding-left: 7px; }
.snap .icon { width: 10px; height: 9px; }
.timeline { margin-top: 11px; }
.ruler { width: 100%; height: 16px; background: #26453a; }
.ruler text { fill: #8db09f; }
.ruler .mid { text-anchor: middle; }
.ruler line { stroke: #7f9f90; }
.stack { min-width: 0; background: #0d0d0d; }
.waves { width: 100%; height: 204px; background: #f5f6fd; }
.guides line { stroke: #e6ebf0; }
.wave { fill: none; stroke: #1d4a3d; stroke-width: .6; }
.zero { stroke: #c06060; stroke-width: .5; opacity: .6; }
.cue { stroke: #d05858; stroke-dasharray: 3 1; }
.cursor { stroke: #ec6b6b; stroke-width: 2; opacity: .8; }
.spectral { padding-top: 9px; background: #555; height: 119px; }
.spectral:nth-child(2) { margin-top: 5px; height: 121px; border-top: 1px dotted #888; }
.spectral svg { width: 100%; height: 100%; shape-rendering: crispEdges; }
.scale { width: 32px; height: 449px; background: #222; }
.scale path { stroke: #555; }
.scale .split { stroke: #111; stroke-width: 2; }
.scale .faint text { fill: #5c5c5c; }

footer { display: grid; grid-template-columns: 176fr 355fr 503fr 160fr; gap: 2px; padding-top: 2px; border-bottom: 2px solid #121212; }
footer section { background: #222; height: 61px; min-width: 0; overflow: hidden; padding-top: 3px; border-top: 1px solid #2c2c2c; }
footer .padded { padding-left: 8px; }
footer h2 { display: flex; align-items: center; gap: 7px; color: #aaa; font-weight: 700; }
footer h2.lit { color: #d4d4d4; }
.transport { display: flex; gap: 11px; margin-top: 8px; padding-left: 4px; color: #ccc; }
.transport .icon { width: 9px; height: 10px; }
.transport .play .icon { height: 8px; }
.play { color: #12c412; }
.pause { color: #999; }
.transport .pause .icon { width: 7px; height: 8px; }
.record { color: #f23c46; }
.transport .record .icon { width: 8px; height: 8px; }
.loop { color: #2a86e8; }
.skip { color: #555; }
.transport .rewind .icon, .transport .forward .icon { width: 10px; }
footer output { display: block; text-align: center; font: 30px/38px "Open Sans", sans-serif; color: #b8b8b8; margin-top: 8px; padding-right: 16px; }
.zooms { display: flex; justify-content: center; gap: 8px; margin-top: 7px; padding-right: 8px; color: #bbb; }
.zooms .icon { width: 12px; height: 12px; }
.zooms button:last-child { color: #505050; }
table { border-collapse: collapse; margin-top: 4px; color: #a0a0a0; table-layout: fixed; width: 175px; }
th, td { padding: 0; font-weight: 400; text-align: left; height: 14px; }
thead th { height: 11px; }
th:first-child { width: 35px; }
td { color: #2d8ceb; }
.status { background: #222; display: flex; gap: 7px; align-items: center; height: 11px; color: #888; }
.status .icon { width: 5px; height: 5px; }

.dialog { position: absolute; top: 138px; left: calc(50% - 212px); width: 425px; background: #222; border: 1px solid #101010; border-radius: 5px; box-shadow: 0 2px 6px #0009; overflow: hidden; color: #aaa; padding-bottom: 7px; }
.bar-top { display: flex; align-items: center; height: 12px; gap: 4px; padding-left: 2px; background: #37363b; color: #aaa; font-weight: 700; }
.bar-top span { flex: 1; text-align: center; padding-right: 34px; }
.bar-top i { width: 6px; height: 6px; border-radius: 50%; background: #55555a; }
.bar-top i.close { background: #f4584e; }
.drow { display: flex; align-items: center; }
.presets { height: 29px; padding: 3px 8px 0; border-bottom: 1px solid #2a2a2a; color: #888; }
.presets button { color: #d8d8d8; margin-left: 5px; }
.presets .sel { width: 132px; margin: 0 3px 0 4px; }
.presets .fav { margin-left: 10px; }
.presets .muted { color: #909090; }
.presets .end { margin-left: auto; color: #bbb; }
.presets .icon { width: 11px; height: 11px; }
.presets .sel .icon { width: 7px; height: 7px; }
.box { padding: 0 13px 0 15px; border-bottom: 1px solid #2a2a2a; }
.capture { height: 34px; padding: 2px 5px 0 2px; gap: 9px; color: #b4b4b4; }
.capture .pill { width: 72px; padding: 0; margin-right: 2px; background: #252525; }
.capture button:nth-child(2) { color: #ddd; }
.print { display: grid; grid-template-columns: minmax(0, 1fr) 29px; padding-left: 3px; }
.scatter { width: 100%; height: 134px; background: #000; }
.scatter .g { stroke: #1a1a1a; stroke-width: 3; }
.curve-line { stroke: #3348c8; stroke-width: 5; }
.scatter circle { fill: #fff; }
.db { width: 29px; height: 134px; overflow: visible; }
.db path, .khz line, .slider line { stroke: #6c6c6c; }
.db text, .khz text, .slider text { font-size: 5px; fill: #999; }
.khz { width: 100%; height: 16px; overflow: visible; }
.khz text, .slider text { text-anchor: middle; }
.legend { height: 17px; color: #909090; }
.key { display: flex; align-items: center; gap: 4px; margin-left: 7px; width: 37px; }
.key i { width: 6px; height: 6px; flex: none; }
.key:nth-child(3) { width: 44px; }
.y { background: #f8ec00; }
.r { background: #f83a3a; }
.t { background: #00b000; }
.scales { height: 24px; color: #a4a4a4; }
.scales .sel { width: 63px; margin: 0 7px 0 3px; }
.scales .pill { width: 66px; padding: 0; margin-left: 1px; }
.scales .end { color: #ccc; margin-right: 5px; }
.scales .icon { width: 9px; height: 9px; }
.scales .sel .icon { width: 8px; height: 8px; }
.sliders { display: grid; grid-template-columns: 53px 232px 1fr; column-gap: 7px; align-items: center; padding: 5px 14px 0 15px; color: #a0a0a0; }
.sliders label { text-align: right; line-height: 12px; align-self: start; }
.slider { height: 21px; }
.slider svg { width: 100%; height: 11px; overflow: visible; }
.slider input { margin-top: -4px; }
.slider .lit { fill: #ccc; }
.slider .low { fill: #686868; }
.sliders output { padding-left: 5px; padding-bottom: 5px; }
.sliders b { color: #2d8ceb; font-weight: 700; }
.check { display: flex; align-items: center; gap: 4px; padding: 0 15px; height: 11px; }
.check input { appearance: none; width: 9px; height: 9px; margin: 0; border: 1px solid #aaa; border-radius: 1px; }
.more { display: flex; justify-content: flex-start; gap: 9px; width: 395px; margin: 3px 14px 0; padding: 0; height: 19px; border-top: 1px solid #292929; color: #c8c8c8; font-weight: 700; }
.more .icon { width: 8px; height: 8px; }
.actions { margin-top: 8px; padding: 7px 8px 0; border-top: 1px solid #2a2a2a; }
.actions .drow { gap: 11px; margin-top: 3px; color: #eee; }
.actions .icon { width: 8px; height: 8px; }
.actions .green { width: 12px; height: 12px; background: #2ea574; color: #16644a; }
.actions .looped { width: 14px; height: 12px; background: #161616; color: #2d96fa; }
.actions .looped .icon { width: 10px; height: 10px; }
.outline { width: 53px; height: 14px; border: 1px solid #a4a4a4; border-radius: 7px; color: #bbb; }
.outline + .outline { margin-left: -6px; }
.actions .end { margin-left: auto; }
</style>
